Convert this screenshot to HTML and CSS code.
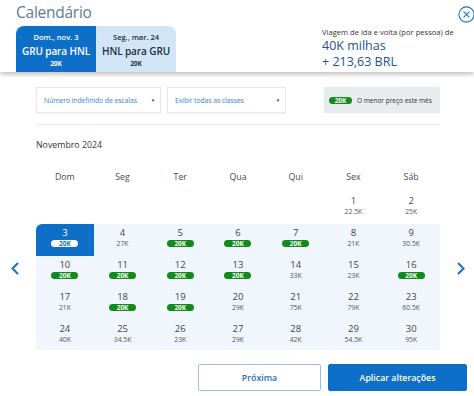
FILE: index.html
```html
<!DOCTYPE html>
<html lang="pt-BR">
<head>
<meta charset="utf-8">
<title>Calendário</title>
<link rel="stylesheet" href="styles.css">
</head>
<body>
<header class="top">
  <div class="top-left">
    <h1 class="title">Calendário</h1>
    <div class="tabs">
      <div class="tab tab-active">
        <span class="tab-date">Dom., nov. 3</span>
        <span class="tab-route">GRU para HNL</span>
        <span class="tab-price">20K</span>
      </div>
      <div class="tab tab-idle">
        <span class="tab-date">Seg., mar. 24</span>
        <span class="tab-route">HNL para GRU</span>
        <span class="tab-price">20K</span>
      </div>
    </div>
  </div>
  <div class="summary">
    <p class="summary-label">Viagem de ida e volta (por pessoa) de</p>
    <p class="summary-value">40K milhas</p>
    <p class="summary-value">+ 213,63 BRL</p>
  </div>
  <button class="close" aria-label="Fechar">
    <svg width="17" height="17" viewBox="0 0 17 17"><circle cx="8.5" cy="8.5" r="7.6" fill="none" stroke="#1f74c9" stroke-width="1.1"/><path d="M5.6 5.6 L11.4 11.4 M11.4 5.6 L5.6 11.4" stroke="#1f74c9" stroke-width="1.1" fill="none"/></svg>
  </button>
</header>
<main class="content">
  <div class="filters">
    <div class="select select-stops"><span>Número indefinido de escalas</span><span class="caret">▼</span></div>
    <div class="select select-class"><span>Exibir todas as classes</span><span class="caret">▼</span></div>
    <div class="legend"><span class="pill">20K</span><span class="legend-text">O menor preço este mês</span></div>
  </div>
  <hr class="sep">
  <h2 class="month">Novembro 2024</h2>
  <div class="weekdays">
    <span>Dom</span><span>Seg</span><span>Ter</span><span>Qua</span><span>Qui</span><span>Sex</span><span>Sáb</span>
  </div>
  <div class="cal-row">
    <div class="arrow arrow-left">
      <svg width="10" height="13" viewBox="0 0 10 13"><path d="M8 1 L2.5 6.5 L8 12" fill="none" stroke="#1a6fc4" stroke-width="2"/></svg>
    </div>
    <div class="days">
      <div class="day empty"></div><div class="day empty"></div><div class="day empty"></div><div class="day empty"></div><div class="day empty"></div>
      <div class="day"><span class="num">1</span><span class="price">22.5K</span></div>
      <div class="day"><span class="num">2</span><span class="price">25K</span></div>

      <div class="day range selected"><span class="num">3</span><span class="pill">20K</span></div>
      <div class="day range"><span class="num">4</span><span class="price">27K</span></div>
      <div class="day range"><span class="num">5</span><span class="pill">20K</span></div>
      <div class="day range"><span class="num">6</span><span class="pill">20K</span></div>
      <div class="day range"><span class="num">7</span><span class="pill">20K</span></div>
      <div class="day range"><span class="num">8</span><span class="price">21K</span></div>
      <div class="day range"><span class="num">9</span><span class="price">30.5K</span></div>

      <div class="day range"><span class="num">10</span><span class="pill">20K</span></div>
      <div class="day range"><span class="num">11</span><span class="pill">20K</span></div>
      <div class="day range"><span class="num">12</span><span class="pill">20K</span></div>
      <div class="day range"><span class="num">13</span><span class="pill">20K</span></div>
      <div class="day range"><span class="num">14</span><span class="price">33K</span></div>
      <div class="day range"><span class="num">15</span><span class="price">23K</span></div>
      <div class="day range"><span class="num">16</span><span class="pill">20K</span></div>

      <div class="day range"><span class="num">17</span><span class="price">21K</span></div>
      <div class="day range"><span class="num">18</span><span class="pill">20K</span></div>
      <div class="day range"><span class="num">19</span><span class="pill">20K</span></div>
      <div class="day range"><span class="num">20</span><span class="price">29K</span></div>
      <div class="day range"><span class="num">21</span><span class="price">75K</span></div>
      <div class="day range"><span class="num">22</span><span class="price">79K</span></div>
      <div class="day range"><span class="num">23</span><span class="price">60.5K</span></div>

      <div class="day range last"><span class="num">24</span><span class="price">40K</span></div>
      <div class="day range last"><span class="num">25</span><span class="price">34.5K</span></div>
      <div class="day range last"><span class="num">26</span><span class="price">23K</span></div>
      <div class="day range last"><span class="num">27</span><span class="price">29K</span></div>
      <div class="day range last"><span class="num">28</span><span class="price">42K</span></div>
      <div class="day range last"><span class="num">29</span><span class="price">54.5K</span></div>
      <div class="day range last"><span class="num">30</span><span class="price">95K</span></div>
    </div>
    <div class="arrow arrow-right">
      <svg width="10" height="13" viewBox="0 0 10 13"><path d="M2 1 L7.5 6.5 L2 12" fill="none" stroke="#1a6fc4" stroke-width="2"/></svg>
    </div>
  </div>
  <div class="actions">
    <button class="btn btn-secondary">Próxima</button>
    <button class="btn btn-primary">Aplicar alterações</button>
  </div>
</main>
</body>
</html>
```
FILE: styles.css
```css
* { box-sizing: border-box; }

html, body {
  margin: 0;
  padding: 0;
  background: #ffffff;
  font-family: "Open Sans", "Noto Sans", "Liberation Sans", sans-serif;
  color: #333333;
}

.top {
  position: relative;
  display: flex;
  height: 72px;
  padding: 0 12px 0 16px;
  background: #ffffff;
  box-shadow: 0 2px 5px rgba(0, 0, 0, 0.28);
}

.top-left {
  display: flex;
  flex-direction: column;
}

.title {
  margin: 0;
  font-size: 15.5px;
  line-height: 24px;
  font-weight: 400;
  letter-spacing: -0.25px;
  color: #5f7b94;
}

.tabs {
  display: flex;
  margin-top: 2px;
  height: 46px;
}

.tab {
  width: 80px;
  display: flex;
  flex-direction: column;
  align-items: center;
  padding-top: 5px;
}

.tab-active {
  background: #0e6fc8;
  color: #ffffff;
  border-radius: 8px 0 0 0;
}

.tab-idle {
  background: #d2e5f6;
  color: #1b2d44;
  border-radius: 0 8px 0 0;
}

.tab-date {
  font-size: 7.5px;
  line-height: 12px;
  font-weight: 600;
}

.tab-route {
  font-size: 10px;
  line-height: 16px;
  font-weight: 600;
  letter-spacing: -0.1px;
}

.tab-price {
  font-size: 6.5px;
  line-height: 9px;
  font-weight: 700;
}

.summary {
  margin-left: auto;
  width: 140px;
  padding-top: 27px;
}

.summary p { margin: 0; }

.summary-label {
  font-size: 7.6px;
  line-height: 11px;
  color: #333333;
}

.summary-value {
  font-size: 12.5px;
  line-height: 16px;
  color: #1d5393;
}

.close {
  position: absolute;
  top: 6px;
  right: -1px;
  width: 17px;
  height: 17px;
  padding: 0;
  border: 0;
  background: transparent;
  display: flex;
}

.content {
  padding: 15px 34px 0 36px;
}

.filters {
  display: flex;
  height: 26px;
}

.select {
  display: flex;
  align-items: center;
  justify-content: space-between;
  height: 26px;
  padding: 0 5px 0 7px;
  border: 1px solid #e6e9ec;
  box-shadow: 0 1px 2px rgba(0, 0, 0, 0.06);
  background: #ffffff;
  font-size: 6.9px;
  letter-spacing: -0.1px;
  white-space: nowrap;
  color: #3a86d3;
}

.select-stops { width: 125px; }
.select-class { width: 119px; margin-left: 6px; }

.caret {
  font-size: 4.5px;
  color: #444444;
}

.legend {
  margin-left: auto;
  width: 116px;
  display: flex;
  align-items: center;
  padding-left: 5px;
  background: #e9ecee;
  white-space: nowrap;
}

.legend .pill {
  width: 23px;
  margin-top: 0;
}

.legend-text {
  margin-left: 5px;
  font-size: 6.6px;
  letter-spacing: -0.05px;
  color: #333333;
}

.sep {
  margin: 11px 0 0 0;
  border: 0;
  border-top: 1px solid #e7e9eb;
  height: 0;
}

.month {
  margin: 13px 0 0 0;
  font-size: 8.8px;
  line-height: 14px;
  font-weight: 400;
  color: #333333;
}

.weekdays {
  display: grid;
  grid-template-columns: repeat(7, 1fr);
  margin-top: 14px;
  height: 26px;
  padding-top: 5px;
}

.weekdays span {
  text-align: center;
  font-size: 8.8px;
  line-height: 12px;
  color: #4a4a4a;
}

.cal-row {
  display: flex;
  margin: 0 -34px 0 -36px;
}

.arrow {
  display: flex;
  align-items: center;
  padding-bottom: 8px;
}

.arrow-left { width: 36px; padding-left: 10px; }
.arrow-right { width: 34px; padding-left: 16px; }

.days {
  flex: 1;
  display: grid;
  grid-template-columns: repeat(7, 1fr);
  grid-auto-rows: 32px;
}

.day {
  display: flex;
  flex-direction: column;
  align-items: center;
  padding-top: 3px;
}

.day.last { height: 30px; }

.range { background: #f1f6fc; }

.num {
  font-size: 9.5px;
  line-height: 12px;
  color: #444444;
}

.price {
  font-size: 6.8px;
  line-height: 9px;
  color: #555555;
}

.pill {
  display: inline-flex;
  align-items: center;
  justify-content: center;
  width: 27px;
  height: 7px;
  margin-top: 1px;
  border-radius: 4px;
  background: #148a1d;
  color: #ffffff;
  font-size: 6.5px;
  line-height: 7px;
  font-weight: 700;
}

.selected {
  background: #0e6fc8;
  border-radius: 6px 0 0 0;
}

.selected .num { color: #ffffff; }

.selected .pill {
  background: #ffffff;
  color: #0e6fc8;
}

.actions {
  display: flex;
  justify-content: flex-end;
  gap: 7px;
  margin: 12px -27px 0 0;
}

.btn {
  height: 27px;
  font-family: "Open Sans", "Noto Sans", "Liberation Sans", sans-serif;
  font-size: 8.8px;
  font-weight: 600;
  border-radius: 2px;
  cursor: pointer;
}

.btn-secondary {
  width: 123px;
  background: #ffffff;
  border: 1px solid #9ec0e2;
  color: #2a6db5;
}

.btn-primary {
  width: 139px;
  background: #0e6fc8;
  border: 1px solid #0e6fc8;
  color: #ffffff;
}
```
